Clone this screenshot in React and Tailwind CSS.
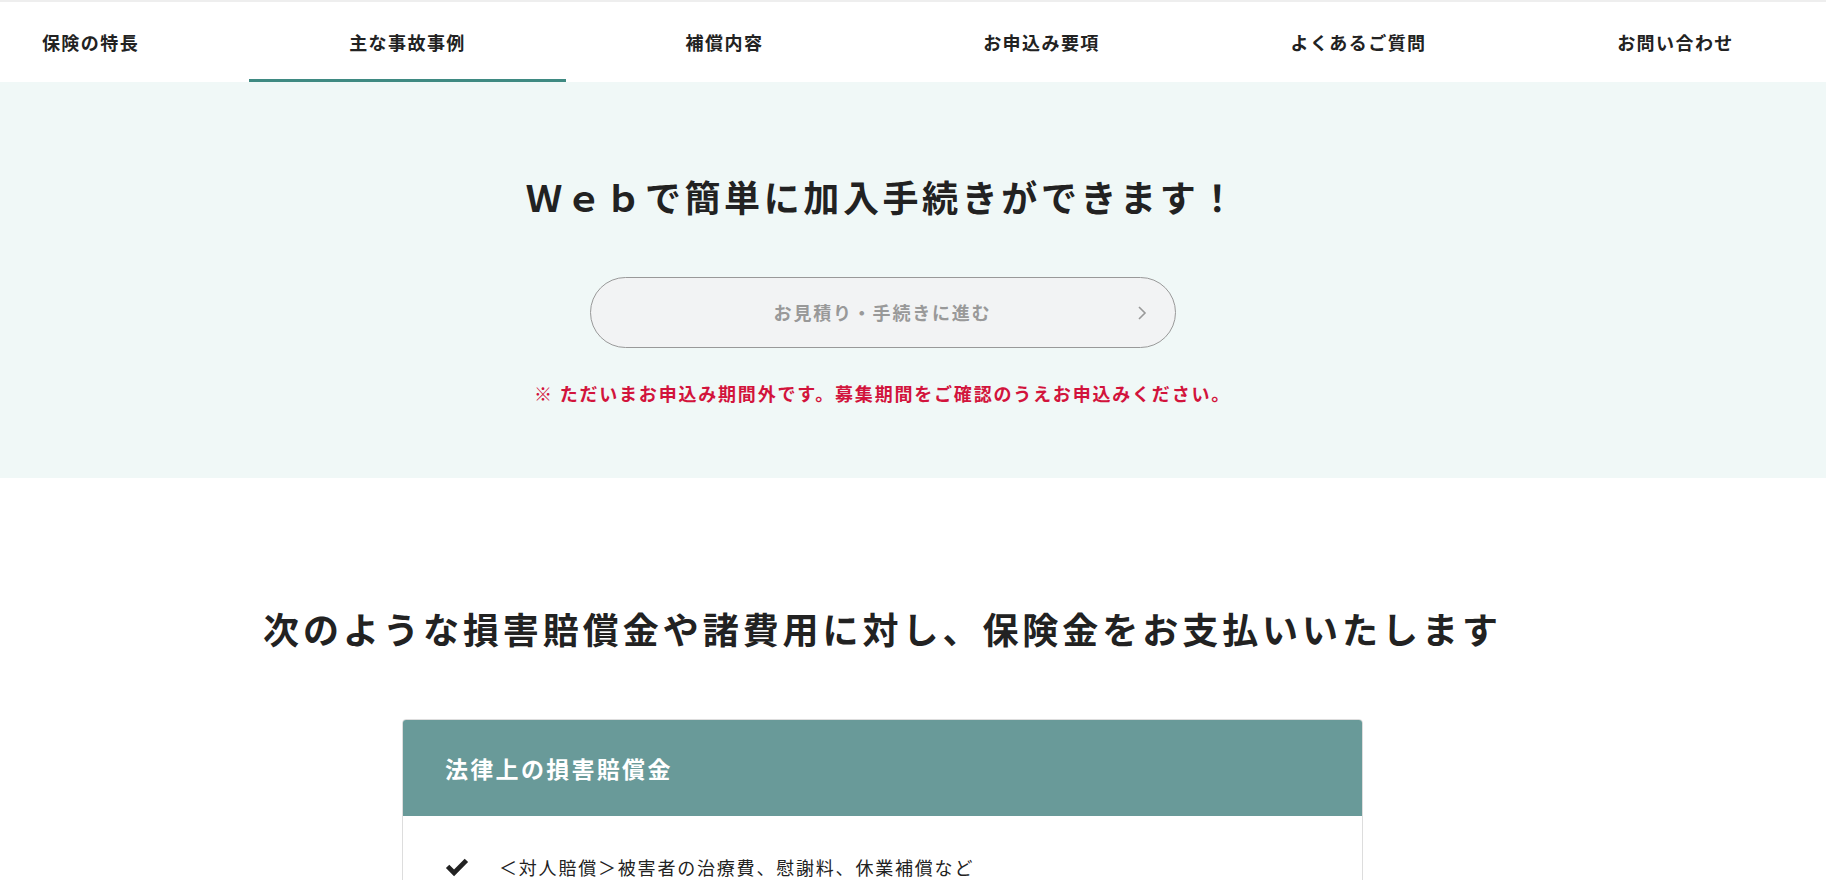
import React from 'react';

const NAV_ITEMS = [
  '保険の特長',
  '主な事故事例',
  '補償内容',
  'お申込み要項',
  'よくあるご質問',
  'お問い合わせ',
];

const FONT = { fontFamily: '"Noto Sans CJK JP", "Noto Sans", sans-serif' };

const Nav = ({ active }) => (
  <nav className="h-[82px] border-t-2 border-[#eeeeee] bg-white overflow-hidden">
    <ul className="flex h-full -ml-[68px]">
      {NAV_ITEMS.map((label, i) => (
        <li
          key={label}
          className="relative w-[317px] shrink-0 h-full flex items-center justify-center"
        >
          <span className="text-[18px] font-bold tracking-[0.08em] text-[#222222]">
            {label}
          </span>
          {i === active && (
            <span className="absolute left-0 right-0 bottom-0 h-[3px] bg-[#3f8a82]" />
          )}
        </li>
      ))}
    </ul>
  </nav>
);

const ChevronRight = () => (
  <svg width="10" height="16" viewBox="0 0 10 16" fill="none" stroke="#999999" strokeWidth="1.6">
    <path d="M2 2l6 6-6 6" />
  </svg>
);

const Check = () => (
  <svg width="24" height="19" viewBox="0 0 22 18" fill="#222222">
    <path d="M0.5 9.5l3.2-3.2 4.5 4.5L18.3 0.7l3.2 3.2L8.2 17.2z" />
  </svg>
);

export default function App() {
  return (
    <div className="min-h-screen bg-white text-[#222222]" style={FONT}>
      <Nav active={1} />

      {/* Web申込み */}
      <section className="bg-[#f0f8f7] pt-[87px] pb-[71px] pr-[61px]">
        <div className="flex flex-col items-center">
          <h2 className="text-[36px] leading-[54px] font-bold tracking-[0.1em]">
            Ｗｅｂで簡単に加入手続きができます！
          </h2>
          <button
            disabled
            className="mt-[54px] w-[586px] h-[71px] rounded-full border border-[#999999] bg-[#f2f3f4] relative flex items-center justify-center"
          >
            <span className="text-[18px] font-bold tracking-[0.1em] text-[#999999]">
              お見積り・手続きに進む
            </span>
            <span className="absolute right-[28px] top-1/2 -translate-y-1/2 flex">
              <ChevronRight />
            </span>
          </button>
          <p className="mt-[32px] text-[18px] leading-[27px] font-bold tracking-[0.1em] text-[#d2143c]">
            ※ ただいまお申込み期間外です。募集期間をご確認のうえお申込みください。
          </p>
        </div>
      </section>

      {/* 補償内容 */}
      <section className="pt-[123px] pb-20 pr-[61px]">
        <div className="flex flex-col items-center">
          <h2 className="text-[36px] leading-[54px] font-bold tracking-[0.11em]">
            次のような損害賠償金や諸費用に対し、保険金をお支払いいたします
          </h2>
          <div className="mt-[64px] w-[961px] rounded-[4px] border border-[#dddddd] overflow-hidden">
            <div className="h-[96px] bg-[#699a99] flex items-center px-[42px]">
              <h3 className="text-[23px] font-bold tracking-[0.1em] text-white">
                法律上の損害賠償金
              </h3>
            </div>
            <ul className="bg-white px-[42px] pt-[38px] pb-10 flex flex-col gap-4">
              <li className="flex items-center gap-[30px]">
                <Check />
                <span className="text-[18px] leading-[27px] tracking-[0.1em]">
                  ＜対人賠償＞被害者の治療費、慰謝料、休業補償など
                </span>
              </li>
              <li className="flex items-center gap-[30px]">
                <Check />
                <span className="text-[18px] leading-[27px] tracking-[0.1em]">
                  ＜対物賠償＞被害物の修理費、再調達費用など
                </span>
              </li>
            </ul>
          </div>
        </div>
      </section>
    </div>
  );
}
